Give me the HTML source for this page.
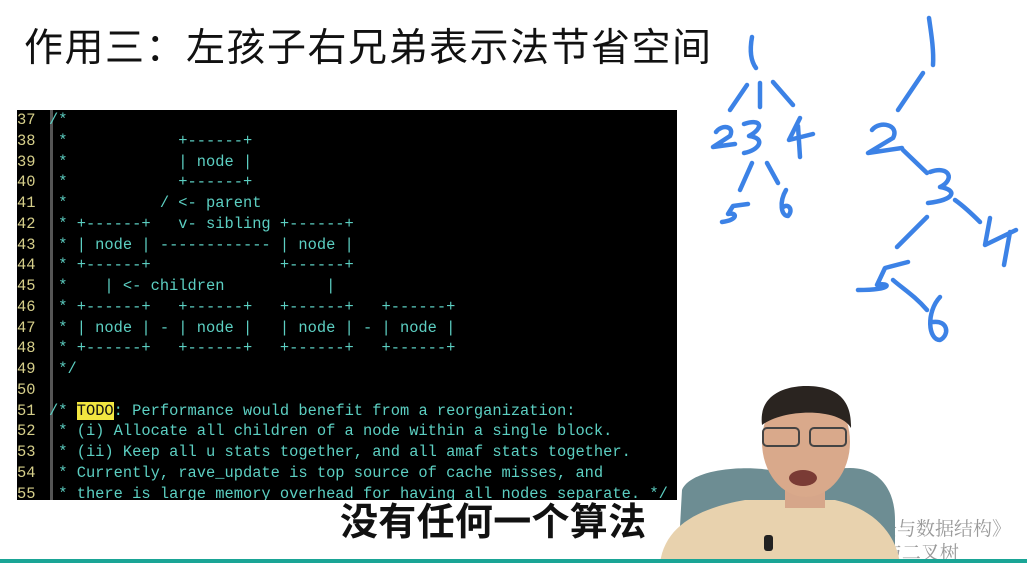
<!DOCTYPE html>
<html><head><meta charset="utf-8"><style>
*{margin:0;padding:0}
body{width:1027px;height:563px;background:#fff;position:relative;overflow:hidden;font-family:"Liberation Sans","Noto Sans CJK SC",sans-serif}
.title{position:absolute;left:24px;top:17px;font-size:39px;letter-spacing:1.5px;color:#111;font-family:"Noto Sans CJK SC",sans-serif;white-space:nowrap;line-height:56px}
.code{position:absolute;left:17px;top:110px;width:660px;height:390px;background:#000;overflow:hidden}
.gut{position:absolute;left:33px;top:0;width:3px;height:390px;background:#555}
pre{position:absolute;top:0;font-family:"Liberation Mono",monospace;font-size:15.4px;line-height:20.75px;color:#5ccfc2}
.nums{left:0;color:#d6cf8a}
.txt{left:32px}
.todo{background:#f2e640;color:#111}
.sub{position:absolute;left:340px;top:494px;font-size:38px;font-weight:bold;color:#111;font-family:"Noto Sans CJK SC",sans-serif;line-height:50px;letter-spacing:0.3px}
.bar{position:absolute;left:0;top:559px;width:1027px;height:4px;background:#1aa596}
.wm{position:absolute;left:878px;top:516px;font-size:19px;color:#999;font-family:"Noto Serif CJK SC",serif;line-height:24px}
</style></head><body>
<div class="title">作用三：左孩子右兄弟表示法节省空间</div>
<div class="code"><div class="gut"></div><pre class="nums">37
38
39
40
41
42
43
44
45
46
47
48
49
50
51
52
53
54
55</pre><pre class="txt">/*
 *            +------+
 *            | node |
 *            +------+
 *          / &lt;- parent
 * +------+   v- sibling +------+
 * | node | ------------ | node |
 * +------+              +------+
 *    | &lt;- children           |
 * +------+   +------+   +------+   +------+
 * | node | - | node |   | node | - | node |
 * +------+   +------+   +------+   +------+
 */

/* <span class="todo">TODO</span>: Performance would benefit from a reorganization:
 * (i) Allocate all children of a node within a single block.
 * (ii) Keep all u stats together, and all amaf stats together.
 * Currently, rave_update is top source of cache misses, and
 * there is large memory overhead for having all nodes separate. */</pre>
</div>
<svg style="position:absolute;left:0;top:0" width="1027" height="563" fill="none" stroke="#3c82e6" stroke-width="4.5" stroke-linecap="round" stroke-linejoin="round">
<path d="M752 37 C750 48 750 60 756 68"/>
<path d="M730 110 L747 85 M760 83 L760 107 M773 82 L793 105"/>
<path d="M716 132 C722 124 735 126 730 136 L713 147 L735 144"/>
<path d="M744 124 C762 118 764 128 749 136 C766 138 760 150 744 153"/>
<path d="M800 118 L789 140 L813 134 M798 126 L800 157"/>
<path d="M752 163 L740 190 M767 163 L778 183"/>
<path d="M748 204 L733 206 L728 214 C738 212 738 220 722 222"/>
<path d="M786 190 C779 202 781 216 788 216 C794 210 788 202 782 208"/>
<path d="M929 18 C931 32 934 50 933 65"/>
<path d="M923 73 L898 110"/>
<path d="M872 130 C880 120 900 125 893 138 L868 153 L902 148"/>
<path d="M903 150 L927 173"/>
<path d="M930 172 C950 165 955 180 940 187 C958 190 955 200 928 203"/>
<path d="M955 200 C962 205 970 212 980 222"/>
<path d="M990 218 L985 245 L1016 230 M1010 232 L1004 265"/>
<path d="M927 217 L897 247"/>
<path d="M908 262 L885 268 L877 285 C890 282 895 290 858 290"/>
<path d="M893 280 C902 288 915 296 927 310"/>
<path d="M940 297 C926 312 928 340 940 340 C950 335 948 320 933 322"/>
</svg>
<div class="wm">去与数据结构》<br>&nbsp;与二叉树</div>
<svg style="position:absolute;left:0;top:0" width="1027" height="563">
<path d="M682 490 C690 470 740 465 770 470 L850 468 C880 468 895 490 895 520 L895 563 L678 563 Z" fill="#6d8d93"/>
<path d="M660 563 C665 525 700 508 745 500 L835 500 C870 508 895 530 900 563 Z" fill="#e8d2ae"/>
<path d="M785 480 L825 480 L825 508 L785 508 Z" fill="#d6a68a"/>
<ellipse cx="806" cy="442" rx="44" ry="55" fill="#d9a98b"/>
<path d="M762 425 C758 392 790 386 806 386 C835 386 852 398 851 428 C840 408 785 408 762 425 Z" fill="#2a2420"/>
<rect x="763" y="428" width="36" height="18" rx="4" fill="none" stroke="#444" stroke-width="2"/>
<rect x="810" y="428" width="36" height="18" rx="4" fill="none" stroke="#444" stroke-width="2"/>
<ellipse cx="803" cy="478" rx="14" ry="8" fill="#7a3b35"/>
<rect x="764" y="535" width="9" height="16" rx="3" fill="#222"/>
</svg>
<div class="sub">没有任何一个算法</div>
<div class="bar"></div>
</body></html>
